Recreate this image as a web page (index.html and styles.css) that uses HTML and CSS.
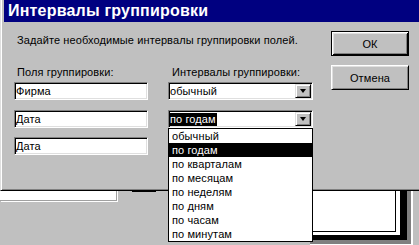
FILE: index.html
```html
<!DOCTYPE html>
<html lang="ru">
<head>
    <meta charset="UTF-8">
    <title>Интервалы группировки</title>
    <link rel="stylesheet" href="styles.css">
</head>
<body>
    <div class="desk">
        <div class="back-panel"></div>
        <div class="back-mark"></div>
        <div class="back-window">
            <div class="frame-black">
                <div class="frame-white">
                    <div class="frame-inner"></div>
                </div>
            </div>
        </div>

        <div class="dialog">
            <div class="titlebar">Интервалы группировки</div>
            <div class="dialog-body">
                <div class="main">
                    <p class="hint">Задайте необходимые интервалы группировки полей.</p>
                    <div class="labels">
                        <span class="label">Поля группировки:</span>
                        <span class="label label-right">Интервалы группировки:</span>
                    </div>
                    <div class="fields">
                        <div class="textbox">Фирма</div>
                        <div class="combo">
                            <span class="combo-text">обычный</span>
                            <span class="combo-btn"><span class="arrow"></span></span>
                        </div>

                        <div class="textbox">Дата</div>
                        <div class="combo open">
                            <span class="combo-text"><span class="selected">по годам</span></span>
                            <span class="combo-btn"><span class="arrow"></span></span>
                            <ul class="dropdown">
                                <li>обычный</li>
                                <li class="active">по годам</li>
                                <li>по кварталам</li>
                                <li>по месяцам</li>
                                <li>по неделям</li>
                                <li>по дням</li>
                                <li>по часам</li>
                                <li>по минутам</li>
                            </ul>
                        </div>

                        <div class="textbox last">Дата</div>
                    </div>
                </div>
                <div class="side">
                    <button class="btn default">ОК</button>
                    <button class="btn">Отмена</button>
                </div>
            </div>
        </div>
    </div>
</body>
</html>
```

FILE: styles.css
```css
* {
    box-sizing: border-box;
}
body {
    margin: 0;
    background: #c0c0c0;
    font-family: "Liberation Sans", Arial, sans-serif;
    font-size: 11px;
    letter-spacing: 0.1px;
    color: #000;
    overflow: hidden;
}
.desk {
    position: relative;
    width: 419px;
    height: 245px;
    overflow: hidden;
}

/* windows behind the dialog */
.back-panel {
    position: absolute;
    left: 0;
    top: 150px;
    width: 117px;
    height: 51px;
    background: #fff;
    border-right: 1px solid #a0a0a0;
    border-bottom: 1px solid #a0a0a0;
    box-shadow: 1px 1px 0 #fff;
}
.back-mark {
    position: absolute;
    left: 132px;
    top: 190px;
    width: 24px;
    height: 2px;
    background: #000;
}
.back-window {
    position: absolute;
    left: 310px;
    top: 120px;
    width: 103px;
    height: 125px;
    background: #808080;
    border-right: 2px solid #fff;
    border-bottom: 1px solid #fff;
    padding: 0 4px 4px 0;
}
.frame-black {
    height: 100%;
    background: #000;
    padding: 0 7px 5px 0;
}
.frame-white {
    height: 100%;
    background: #fff;
    padding: 0 4px 3px 0;
}
.frame-inner {
    height: 100%;
    background: #fff;
    border-right: 1px solid #000;
    border-bottom: 1px solid #000;
}

/* dialog */
.dialog {
    position: absolute;
    left: 0;
    top: 0;
    width: 440px;
    height: 191px;
    background: #c0c0c0;
    border-left: 1px solid #dfdfdf;
    border-bottom: 1px solid #000;
    padding-left: 3px;
    box-shadow: inset 1px 0 #fff, inset 0 -1px #808080;
}
.titlebar {
    height: 22px;
    background: #000080;
    color: #fff;
    font-weight: bold;
    font-size: 16px;
    letter-spacing: 0.2px;
    line-height: 22px;
    padding-left: 4px;
    white-space: nowrap;
}
.dialog-body {
    display: flex;
}
.main {
    width: 327px;
    padding: 11px 0 0 10px;
}
.hint {
    margin: 0 0 0 3px;
    line-height: 14px;
    white-space: nowrap;
}
.labels {
    display: grid;
    grid-template-columns: 134px 145px;
    column-gap: 20px;
    margin-top: 18px;
    line-height: 14px;
}
.label {
    padding-left: 3px;
    white-space: nowrap;
}
.label-right {
    padding-left: 4px;
}
.fields {
    display: grid;
    grid-template-columns: 134px 145px;
    column-gap: 20px;
    row-gap: 10px;
    margin-top: 3px;
}
.textbox,
.combo {
    height: 18px;
    background: #fff;
    border: 1px solid;
    border-color: #808080 #fff #fff #808080;
    box-shadow: inset 1px 1px #000, inset -1px -1px #dfdfdf;
    line-height: 16px;
    padding-left: 1px;
    white-space: nowrap;
}
.textbox.last {
    margin-top: -1px;
}
.combo {
    position: relative;
    display: flex;
    align-items: center;
    padding: 1px;
}
.combo-text {
    flex: 1;
    line-height: 14px;
}
.selected {
    background: #000;
    color: #fff;
    display: inline-block;
    line-height: 13px;
    padding-right: 1px;
}
.combo-btn {
    width: 16px;
    height: 14px;
    background: #c0c0c0;
    border: 1px solid;
    border-color: #dfdfdf #000 #000 #dfdfdf;
    box-shadow: inset 1px 1px #fff, inset -1px -1px #808080;
    display: flex;
    align-items: center;
    justify-content: center;
}
.arrow {
    width: 0;
    height: 0;
    border-left: 3.5px solid transparent;
    border-right: 3.5px solid transparent;
    border-top: 4px solid #000;
}
.dropdown {
    position: absolute;
    left: -1px;
    top: 17px;
    width: 145px;
    margin: 0;
    padding: 0;
    list-style: none;
    background: #fff;
    border: 1px solid #000;
    z-index: 2;
}
.dropdown li {
    height: 14px;
    line-height: 14px;
    padding-left: 3px;
}
.dropdown li.active {
    background: #000;
    color: #fff;
}

.side {
    display: flex;
    flex-direction: column;
    gap: 9px;
    padding-top: 9px;
}
.btn {
    width: 78px;
    height: 25px;
    font: inherit;
    letter-spacing: inherit;
    color: #000;
    background: #c0c0c0;
    border: 1px solid;
    border-color: #fff #000 #000 #fff;
    box-shadow: inset 1px 1px #dfdfdf, inset -1px -1px #808080;
    padding: 0;
}
.btn.default {
    border-color: #000;
    box-shadow: inset 1px 1px #fff, inset -1px -1px #000, inset 2px 2px #dfdfdf, inset -2px -2px #808080;
}
```
